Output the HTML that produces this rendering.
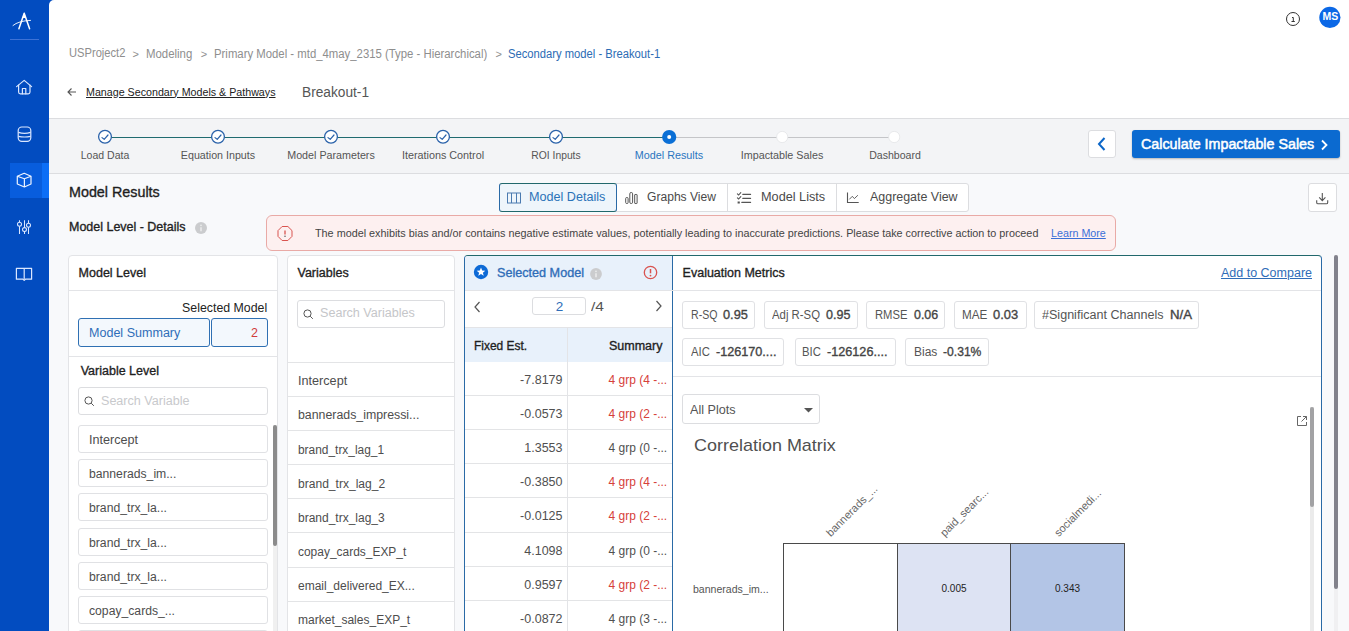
<!DOCTYPE html>
<html><head><meta charset="utf-8">
<style>
*{box-sizing:border-box;margin:0;padding:0}
html,body{width:1349px;height:631px;overflow:hidden;font-family:"Liberation Sans",sans-serif;background:#f8f9fb;position:relative}
.a{position:absolute}
.t{position:absolute;white-space:nowrap;line-height:1}
svg{position:absolute;overflow:visible}
</style></head><body>
<div class="a" style="left:40px;top:0px;width:30px;height:30px;background:#024cc0;border-radius:0px;"></div>
<div class="a" style="left:0px;top:0px;width:49px;height:631px;background:#024cc0;border-radius:0px;"></div>
<div class="a" style="left:49px;top:0;width:1300px;height:119px;background:#fff;border-bottom:1px solid #dcdde0;border-top-left-radius:5px"></div>
<div class="a" style="left:49px;top:118px;width:1300px;height:56px;background:#f3f4f6;border-top:1px solid #dcdde0;border-bottom:1px solid #dcdde0"></div>
<svg style="left:0px;top:0px" width="49" height="300">
  <g fill="none" stroke="#fff" stroke-linecap="round" stroke-linejoin="round">
    <path d="M18.9 28.8 L24.2 13.2 L29.6 28.8" stroke-width="1.5"/>
    <path d="M13 25.5 Q18.5 20.8 30.5 20.4" stroke-width="0.9"/>
  </g>
  <path d="M24.2 12.6 L26 18 L22.4 18 Z" fill="#fff"/>
  <line x1="10" y1="39.5" x2="39" y2="39.5" stroke="#3d72d6" stroke-width="1"/>
  <g fill="none" stroke="#dbe7ff" stroke-width="1.2" stroke-linejoin="round" stroke-linecap="round">
    <path d="M16.6 86.6 L24.2 80.4 L31.6 86.6"/>
    <path d="M18.6 85 V92 Q18.6 93.8 20.4 93.8 H28.2 Q30 93.8 30 92 V85"/>
    <path d="M22.4 93.8 V88.5 H25.8 V93.8"/>
  </g>
  <g fill="none" stroke="#dbe7ff" stroke-width="1.2">
    <rect x="18.2" y="127" width="12.6" height="14.4" rx="3.6"/>
    <path d="M18.4 132.4 Q24.5 134.4 30.6 132.4"/>
    <path d="M18.4 136.4 Q24.5 137.6 30.6 136.4"/>
  </g>
  <rect x="10" y="163" width="32" height="35" fill="#085ddd"/>
  <rect x="42" y="163" width="7" height="35" fill="#0c6ef6"/>
  <g fill="none" stroke="#eef4ff" stroke-width="1.2" stroke-linejoin="round">
    <path d="M24.2 173.3 L31 176.3 V184 L24.4 187 L17.3 184 V176.3 Z"/>
    <path d="M17.3 176.3 L24.4 178.8 L31 176.3 M24.4 178.8 V187"/>
  </g>
  <g fill="none" stroke="#dbe7ff" stroke-width="1.05">
    <path d="M19.5 220.3 V222.3 M19.5 226.3 V234 M24.5 220.3 V227.6 M24.5 231.6 V234 M28.5 220.3 V223.3 M28.5 227.3 V234"/>
    <circle cx="19.5" cy="224.3" r="2"/>
    <circle cx="24.5" cy="229.6" r="2"/>
    <circle cx="28.5" cy="225.3" r="2"/>
  </g>
  <g fill="none" stroke="#dbe7ff" stroke-width="1.2" stroke-linejoin="round">
    <path d="M16.4 268.3 H31.6 V279.2 H25.4 L24.2 280.3 L23 279.2 H16.4 Z"/>
    <path d="M24.2 268.3 V279.2"/>
  </g></svg>
<svg style="left:1280px;top:5px" width="69" height="30"><circle cx="13" cy="14" r="6.5" fill="none" stroke="#333" stroke-width="1"/>
  <path d="M12 12.5 H13.3 V16.5 M11.5 16.5 H14.8" fill="none" stroke="#333" stroke-width="1"/>
  <circle cx="49.9" cy="12.4" r="10.6" fill="#0b68e6"/></svg>
<div id="t1" class="t" style="left:1030.30px;width:600px;text-align:center;top:10.75px;font-size:10.5px;color:#fff;font-weight:bold;">MS</div>
<div id="t2" class="t" style="transform:scaleX(0.9291);transform-origin:0 50%;left:68.60px;top:47.00px;font-size:12px;color:#8e8e8e;">USProject2</div>
<div id="t3" class="t" style="left:132.60px;top:48.50px;font-size:11px;color:#8e8e8e;">&gt;</div>
<div id="t4" class="t" style="transform:scaleX(0.9507);transform-origin:0 50%;left:146.40px;top:48.00px;font-size:12px;color:#8e8e8e;">Modeling</div>
<div id="t5" class="t" style="left:200.80px;top:48.50px;font-size:11px;color:#8e8e8e;">&gt;</div>
<div id="t6" class="t" style="transform:scaleX(0.9461);transform-origin:0 50%;left:214.00px;top:48.00px;font-size:12px;color:#8e8e8e;">Primary Model - mtd_4may_2315 (Type - Hierarchical)</div>
<div id="t7" class="t" style="left:495.50px;top:48.50px;font-size:11px;color:#8e8e8e;">&gt;</div>
<div id="t8" class="t" style="transform:scaleX(0.9352);transform-origin:0 50%;left:508.30px;top:48.00px;font-size:12px;color:#2c6cb4;">Secondary model - Breakout-1</div>
<svg style="left:66px;top:86px" width="12" height="12"><path d="M2 6 H10 M5.5 2.5 L2 6 L5.5 9.5" fill="none" stroke="#555" stroke-width="1.1"/></svg>
<div id="t9" class="t" style="transform:scaleX(0.9715);transform-origin:0 50%;left:85.50px;top:86.50px;font-size:11px;color:#222;text-decoration:underline;">Manage Secondary Models &amp; Pathways</div>
<div id="t10" class="t" style="transform:scaleX(0.9783);transform-origin:0 50%;left:302.00px;top:85.00px;font-size:14px;color:#555;">Breakout-1</div>
<svg style="left:0px;top:118px" width="1000" height="56">
  <rect x="105" y="19" width="564" height="1" fill="#1f6b70"/>
  <rect x="669" y="19" width="225" height="1" fill="#c4c5c8"/>
  <g fill="#fff" stroke="#2a62aa" stroke-width="1.3">
    <circle cx="105" cy="18.8" r="6.4"/><circle cx="218" cy="18.8" r="6.4"/><circle cx="331" cy="18.8" r="6.4"/>
    <circle cx="443" cy="18.8" r="6.4"/><circle cx="556" cy="18.8" r="6.4"/>
  </g>
  <g fill="none" stroke="#2a62aa" stroke-width="1.2" stroke-linecap="round" stroke-linejoin="round">
    <path d="M102 19.6 L104.2 21.3 L108 17"/><path d="M215 19.6 L217.2 21.3 L221 17"/>
    <path d="M328 19.6 L330.2 21.3 L334 17"/><path d="M440 19.6 L442.2 21.3 L446 17"/>
    <path d="M553 19.6 L555.2 21.3 L559 17"/>
  </g>
  <circle cx="669.2" cy="19" r="7.1" fill="#0a6fd6"/>
  <circle cx="669.2" cy="19" r="2" fill="#fff"/>
  <circle cx="782.2" cy="19" r="5.6" fill="#fff" stroke="#e3e4e7" stroke-width="0.8"/>
  <circle cx="894.2" cy="19" r="5.6" fill="#fff" stroke="#e3e4e7" stroke-width="0.8"/></svg>
<div id="t11" class="t" style="transform:scaleX(0.9554);transform-origin:50% 50%;left:-195.25px;width:600px;text-align:center;top:149.50px;font-size:11px;color:#555;">Load Data</div>
<div id="t12" class="t" style="transform:scaleX(0.9718);transform-origin:50% 50%;left:-82.25px;width:600px;text-align:center;top:149.50px;font-size:11px;color:#555;">Equation Inputs</div>
<div id="t13" class="t" style="transform:scaleX(0.9747);transform-origin:50% 50%;left:30.60px;width:600px;text-align:center;top:149.50px;font-size:11px;color:#555;">Model Parameters</div>
<div id="t14" class="t" style="transform:scaleX(0.9813);transform-origin:50% 50%;left:143.30px;width:600px;text-align:center;top:149.50px;font-size:11px;color:#555;">Iterations Control</div>
<div id="t15" class="t" style="transform:scaleX(0.9377);transform-origin:50% 50%;left:256.35px;width:600px;text-align:center;top:149.50px;font-size:11px;color:#555;">ROI Inputs</div>
<div id="t16" class="t" style="transform:scaleX(0.9799);transform-origin:50% 50%;left:369.15px;width:600px;text-align:center;top:149.50px;font-size:11px;color:#2a74c0;">Model Results</div>
<div id="t17" class="t" style="transform:scaleX(0.9788);transform-origin:50% 50%;left:482.00px;width:600px;text-align:center;top:149.50px;font-size:11px;color:#555;">Impactable Sales</div>
<div id="t18" class="t" style="transform:scaleX(0.9605);transform-origin:50% 50%;left:594.85px;width:600px;text-align:center;top:149.50px;font-size:11px;color:#555;">Dashboard</div>
<div class="a" style="left:1088px;top:130px;width:28px;height:28px;background:#fff;border:1px solid #dcdde0;border-radius:3px;"></div>
<svg style="left:1088px;top:130px" width="28" height="28"><path d="M16.5 8 L11 14 L16.5 20" fill="none" stroke="#0b66c8" stroke-width="2"/></svg>
<div class="a" style="left:1132px;top:130px;width:208px;height:28px;background:#0b6ad0;border-radius:3px;box-shadow:0 1px 2px rgba(0,0,0,.25);"></div>
<div id="t19" class="t" style="transform:scaleX(1.0209);transform-origin:0 50%;left:1140.80px;top:137.00px;font-size:14px;color:#fff;-webkit-text-stroke:0.35px #fff;-webkit-text-stroke:0.5px #fff;">Calculate Impactable Sales</div>
<svg style="left:1132px;top:130px" width="208" height="28"><path d="M190 10.5 L194.5 15 L190 19.5" fill="none" stroke="#fff" stroke-width="1.8"/></svg>
<div id="t20" class="t" style="transform:scaleX(1.0225);transform-origin:0 50%;left:68.90px;top:185.00px;font-size:14px;color:#1f1f1f;-webkit-text-stroke:0.35px #1f1f1f;">Model Results</div>
<div id="t21" class="t" style="transform:scaleX(0.9597);transform-origin:0 50%;left:69.00px;top:220.00px;font-size:13px;color:#1f1f1f;-webkit-text-stroke:0.35px #1f1f1f;">Model Level - Details</div>
<svg style="left:195px;top:221.5px" width="12" height="12"><circle cx="6" cy="6" r="6" fill="#cbccce"/><path d="M6 5.2 V9.2" stroke="#eceded" stroke-width="1.5"/><circle cx="6" cy="3.3" r="0.85" fill="#eceded"/></svg>
<div class="a" style="left:499px;top:183px;width:470px;height:29px;background:#fff;border:1px solid #dcdde0;border-radius:3px;"></div>
<div class="a" style="left:616px;top:183px;width:1px;height:29px;background:#dcdde0;border-radius:0px;"></div>
<div class="a" style="left:727px;top:183px;width:1px;height:29px;background:#dcdde0;border-radius:0px;"></div>
<div class="a" style="left:836px;top:183px;width:1px;height:29px;background:#dcdde0;border-radius:0px;"></div>
<div class="a" style="left:499px;top:183px;width:118px;height:29px;background:#eef5fb;border:1px solid #2a6aa6;border-radius:3px;border-top-color:#21686c;border-bottom-color:#21686c;"></div>
<svg style="left:507px;top:192px" width="14" height="11"><g fill="none" stroke="#4a7ab0" stroke-width="1"><rect x="0.5" y="1" width="13" height="10"/><path d="M4.5 1 V11 M9.5 1 V11"/></g></svg>
<div id="t22" class="t" style="transform:scaleX(1.0075);transform-origin:0 50%;left:529.00px;top:190.75px;font-size:12.5px;color:#2a72b8;">Model Details</div>
<svg style="left:625px;top:190px" width="13" height="15"><g fill="none" stroke="#555" stroke-width="1"><rect x="0.7" y="7.5" width="2.4" height="6" rx="1"/><rect x="4.8" y="2.5" width="2.8" height="11" rx="1.3"/><rect x="9.7" y="4.5" width="2.4" height="9" rx="0.4"/></g></svg>
<div id="t23" class="t" style="transform:scaleX(0.9671);transform-origin:0 50%;left:646.60px;top:190.75px;font-size:12.5px;color:#4a4a4a;">Graphs View</div>
<svg style="left:736px;top:190px" width="16" height="15"><g fill="none" stroke="#555" stroke-width="1.1" stroke-linecap="round"><path d="M1.4 3.9 L2.6 5 L4.8 2.6 M1.4 7.9 L2.6 9 L4.8 6.6"/><path d="M6.8 4.4 H14.6 M6.8 8.4 H14.6 M5.8 12.4 H14.6"/></g><rect x="1.6" y="11.5" width="2.2" height="2" fill="#555"/></svg>
<div id="t24" class="t" style="transform:scaleX(1.0153);transform-origin:0 50%;left:760.80px;top:190.75px;font-size:12.5px;color:#4a4a4a;">Model Lists</div>
<svg style="left:846px;top:191px" width="14" height="13"><g fill="none" stroke="#555" stroke-width="1"><path d="M1.5 1.5 V11.5 H12.7" stroke-width="1.1"/><path d="M3.3 8.4 L6.3 5.3 L8.4 7.6 L11.9 4.2" stroke-width="0.9"/></g></svg>
<div id="t25" class="t" style="transform:scaleX(0.9951);transform-origin:0 50%;left:870.00px;top:190.75px;font-size:12.5px;color:#4a4a4a;">Aggregate View</div>
<div class="a" style="left:1308px;top:183px;width:29px;height:29px;background:#fff;border:1px solid #dcdde0;border-radius:3px;"></div>
<svg style="left:1308px;top:183px" width="29" height="29"><g fill="none" stroke="#555" stroke-width="1.1"><path d="M14.3 10 V17.6 M11.2 14.4 L14.3 17.6 L17.4 14.4"/><path d="M8.7 17.3 V19.4 Q8.7 20.8 10.1 20.8 H18.3 Q19.7 20.8 19.7 19.4 V17.3"/></g></svg>
<div class="a" style="left:266px;top:215px;width:850px;height:36px;background:#fdf0f0;border:1px solid #e9aaa6;border-radius:6px;"></div>
<svg style="left:277px;top:225px" width="16" height="16"><path d="M5.1 1.5 H10.9 L15 5.6 V11.4 L10.9 15.5 H5.1 L1 11.4 V5.6 Z" fill="none" stroke="#d9534f" stroke-width="1" stroke-linejoin="round"/><path d="M8 5.6 V9.6" stroke="#d9534f" stroke-width="1.3"/><circle cx="8" cy="11.3" r="0.75" fill="#555"/></svg>
<div id="t26" class="t" style="transform:scaleX(0.9826);transform-origin:0 50%;left:314.60px;top:227.50px;font-size:11px;color:#444;">The model exhibits bias and/or contains negative estimate values, potentially leading to inaccurate predictions. Please take corrective action to proceed</div>
<div id="t27" class="t" style="transform:scaleX(0.9740);transform-origin:0 50%;left:1051.20px;top:227.50px;font-size:11px;color:#3b6fd8;text-decoration:underline;">Learn More</div>
<div class="a" style="left:68px;top:255px;width:210px;height:400px;background:#fff;border:1px solid #e3e4e7;border-radius:4px;"></div>
<div class="a" style="left:69px;top:290px;width:208px;height:1px;background:#e3e4e7;border-radius:0px;"></div>
<div id="t28" class="t" style="left:78.60px;top:266.75px;font-size:12.5px;color:#1f1f1f;-webkit-text-stroke:0.35px #1f1f1f;">Model Level</div>
<div id="t29" class="t" style="transform:scaleX(0.9876);transform-origin:100% 50%;right:1081.60px;top:301.75px;font-size:12.5px;color:#222;">Selected Model</div>
<div class="a" style="left:78px;top:318px;width:132px;height:29px;background:#f3f8fd;border:1px solid #2f70b3;border-radius:3px;"></div>
<div id="t30" class="t" style="transform:scaleX(1.0033);transform-origin:0 50%;left:89.00px;top:326.75px;font-size:12.5px;color:#2f6db8;">Model Summary</div>
<div class="a" style="left:211px;top:318px;width:57px;height:29px;background:#f3f8fd;border:1px solid #2f70b3;border-radius:3px;"></div>
<div id="t31" class="t" style="right:1091.00px;top:326.75px;font-size:12.5px;color:#d13b3b;">2</div>
<div class="a" style="left:69px;top:356px;width:208px;height:1px;background:#e3e4e7;border-radius:0px;"></div>
<div id="t32" class="t" style="transform:scaleX(1.0000);transform-origin:0 50%;left:80.70px;top:364.75px;font-size:12.5px;color:#1f1f1f;-webkit-text-stroke:0.35px #1f1f1f;">Variable Level</div>
<div class="a" style="left:78px;top:387px;width:190px;height:28px;background:#fff;border:1px solid #dcdde0;border-radius:3px;"></div>
<svg style="left:84px;top:396px" width="11" height="11"><circle cx="4.5" cy="4.5" r="3.6" fill="none" stroke="#555" stroke-width="1"/><path d="M7.2 7.2 L9.8 9.8" stroke="#555" stroke-width="1"/></svg>
<div id="t33" class="t" style="transform:scaleX(1.0055);transform-origin:0 50%;left:101.00px;top:394.75px;font-size:12.5px;color:#c8c9cc;">Search Variable</div>
<div class="a" style="left:78px;top:425px;width:190px;height:28px;background:#fff;border:1px solid #e0e1e4;border-radius:3px;"></div>
<div id="t34" class="t" style="transform:scaleX(1.0074);transform-origin:0 50%;left:89.00px;top:433.75px;font-size:12.5px;color:#4d4d4d;">Intercept</div>
<div class="a" style="left:78px;top:459px;width:190px;height:28px;background:#fff;border:1px solid #e0e1e4;border-radius:3px;"></div>
<div id="t35" class="t" style="transform:scaleX(0.9750);transform-origin:0 50%;left:89.00px;top:467.75px;font-size:12.5px;color:#4d4d4d;">bannerads_im...</div>
<div class="a" style="left:78px;top:493px;width:190px;height:28px;background:#fff;border:1px solid #e0e1e4;border-radius:3px;"></div>
<div id="t36" class="t" style="transform:scaleX(0.9760);transform-origin:0 50%;left:89.00px;top:501.75px;font-size:12.5px;color:#4d4d4d;">brand_trx_la...</div>
<div class="a" style="left:78px;top:528px;width:190px;height:28px;background:#fff;border:1px solid #e0e1e4;border-radius:3px;"></div>
<div id="t37" class="t" style="transform:scaleX(0.9760);transform-origin:0 50%;left:89.00px;top:536.75px;font-size:12.5px;color:#4d4d4d;">brand_trx_la...</div>
<div class="a" style="left:78px;top:562px;width:190px;height:28px;background:#fff;border:1px solid #e0e1e4;border-radius:3px;"></div>
<div id="t38" class="t" style="transform:scaleX(0.9760);transform-origin:0 50%;left:89.00px;top:570.75px;font-size:12.5px;color:#4d4d4d;">brand_trx_la...</div>
<div class="a" style="left:78px;top:596px;width:190px;height:28px;background:#fff;border:1px solid #e0e1e4;border-radius:3px;"></div>
<div id="t39" class="t" style="transform:scaleX(0.9745);transform-origin:0 50%;left:89.00px;top:604.75px;font-size:12.5px;color:#4d4d4d;">copay_cards_...</div>
<div class="a" style="left:78px;top:630px;width:190px;height:28px;background:#fff;border:1px solid #e0e1e4;border-radius:3px;"></div>
<div class="a" style="left:273px;top:425px;width:4px;height:206px;background:#f0f0f0;border-radius:0px;"></div>
<div class="a" style="left:273px;top:425px;width:4px;height:121px;background:#8b8b8b;border-radius:2px;"></div>
<div class="a" style="left:287px;top:255px;width:168px;height:400px;background:#fff;border:1px solid #e3e4e7;border-radius:4px;"></div>
<div class="a" style="left:288px;top:290px;width:166px;height:1px;background:#e3e4e7;border-radius:0px;"></div>
<div id="t40" class="t" style="left:297.50px;top:266.75px;font-size:12.5px;color:#1f1f1f;-webkit-text-stroke:0.35px #1f1f1f;">Variables</div>
<div class="a" style="left:297px;top:300px;width:148px;height:28px;background:#fff;border:1px solid #dcdde0;border-radius:3px;"></div>
<svg style="left:303px;top:309px" width="11" height="11"><circle cx="4.5" cy="4.5" r="3.6" fill="none" stroke="#555" stroke-width="1"/><path d="M7.2 7.2 L9.8 9.8" stroke="#555" stroke-width="1"/></svg>
<div id="t41" class="t" style="transform:scaleX(1.0067);transform-origin:0 50%;left:319.90px;top:306.75px;font-size:12.5px;color:#c5c6c9;">Search Variables</div>
<div class="a" style="left:288px;top:362px;width:166px;height:1px;background:#e3e4e6;border-radius:0px;"></div>
<div id="t42" class="t" style="transform:scaleX(1.0115);transform-origin:0 50%;left:297.80px;top:374.75px;font-size:12.5px;color:#4d4d4d;">Intercept</div>
<div class="a" style="left:288px;top:396px;width:166px;height:1px;background:#e3e4e6;border-radius:0px;"></div>
<div id="t43" class="t" style="transform:scaleX(0.9871);transform-origin:0 50%;left:297.80px;top:408.75px;font-size:12.5px;color:#4d4d4d;">bannerads_impressi...</div>
<div class="a" style="left:288px;top:430px;width:166px;height:1px;background:#e3e4e6;border-radius:0px;"></div>
<div id="t44" class="t" style="transform:scaleX(0.9529);transform-origin:0 50%;left:297.80px;top:443.75px;font-size:12.5px;color:#4d4d4d;">brand_trx_lag_1</div>
<div class="a" style="left:288px;top:464px;width:166px;height:1px;background:#e3e4e6;border-radius:0px;"></div>
<div id="t45" class="t" style="transform:scaleX(0.9650);transform-origin:0 50%;left:297.80px;top:477.75px;font-size:12.5px;color:#4d4d4d;">brand_trx_lag_2</div>
<div class="a" style="left:288px;top:498px;width:166px;height:1px;background:#e3e4e6;border-radius:0px;"></div>
<div id="t46" class="t" style="transform:scaleX(0.9595);transform-origin:0 50%;left:297.80px;top:511.75px;font-size:12.5px;color:#4d4d4d;">brand_trx_lag_3</div>
<div class="a" style="left:288px;top:532px;width:166px;height:1px;background:#e3e4e6;border-radius:0px;"></div>
<div id="t47" class="t" style="transform:scaleX(0.9562);transform-origin:0 50%;left:297.80px;top:545.75px;font-size:12.5px;color:#4d4d4d;">copay_cards_EXP_t</div>
<div class="a" style="left:288px;top:567px;width:166px;height:1px;background:#e3e4e6;border-radius:0px;"></div>
<div id="t48" class="t" style="transform:scaleX(0.9605);transform-origin:0 50%;left:297.80px;top:579.75px;font-size:12.5px;color:#4d4d4d;">email_delivered_EX...</div>
<div class="a" style="left:288px;top:601px;width:166px;height:1px;background:#e3e4e6;border-radius:0px;"></div>
<div id="t49" class="t" style="transform:scaleX(0.9612);transform-origin:0 50%;left:297.80px;top:613.75px;font-size:12.5px;color:#4d4d4d;">market_sales_EXP_t</div>
<div class="a" style="left:464px;top:255px;width:858px;height:400px;background:#fff;border:1px solid #2a6aa6;border-radius:4px;border-top-color:#21686c;"></div>
<div class="a" style="left:465px;top:256px;width:207px;height:34px;background:#e8f1fb;border-top-left-radius:3px"></div>
<div class="a" style="left:672px;top:256px;width:1px;height:375px;background:#2a6aa6;border-radius:0px;"></div>
<div class="a" style="left:465px;top:290px;width:856px;height:1px;background:#e3e4e7;border-radius:0px;"></div>
<svg style="left:473px;top:264px" width="16" height="16"><circle cx="8" cy="8" r="7.2" fill="#0d6ad6"/><path d="M8 3.6 L9.2 6.6 L12.3 6.7 L9.9 8.7 L10.7 11.8 L8 10 L5.3 11.8 L6.1 8.7 L3.7 6.7 L6.8 6.6 Z" fill="#fff"/></svg>
<div id="t50" class="t" style="transform:scaleX(1.0096);transform-origin:0 50%;left:497.40px;top:266.75px;font-size:12.5px;color:#2f6db8;-webkit-text-stroke:0.35px #2f6db8;">Selected Model</div>
<svg style="left:590px;top:268px" width="12" height="12"><circle cx="6" cy="6" r="5.9" fill="#cbccce"/><path d="M6 5.2 V9.2" stroke="#eceded" stroke-width="1.5"/><circle cx="6" cy="3.3" r="0.85" fill="#eceded"/></svg>
<svg style="left:643px;top:265px" width="15" height="15"><circle cx="7.5" cy="7.5" r="6.2" fill="none" stroke="#d9534f" stroke-width="1.3"/><path d="M7.5 4 V8.3" stroke="#d9534f" stroke-width="1.5"/><circle cx="7.5" cy="10.6" r="0.9" fill="#d9534f"/></svg>
<svg style="left:472px;top:300px" width="10" height="14"><path d="M7.5 2 L3 7 L7.5 12" fill="none" stroke="#555" stroke-width="1.2"/></svg>
<div class="a" style="left:532px;top:297px;width:54px;height:18px;background:#fff;border:1px solid #dcdde0;border-radius:3px;"></div>
<div id="t51" class="t" style="left:259.50px;width:600px;text-align:center;top:299.75px;font-size:13.5px;color:#2f6db8;">2</div>
<div id="t52" class="t" style="transform:scaleX(1.1540);transform-origin:0 50%;left:591.20px;top:299.75px;font-size:13.5px;color:#555;">/4</div>
<svg style="left:654px;top:299px" width="10" height="14"><path d="M2.5 2 L7 7 L2.5 12" fill="none" stroke="#555" stroke-width="1.2"/></svg>
<div class="a" style="left:465px;top:327px;width:207px;height:35px;background:#e8f1fb;border-top:1px solid #e3e4e7"></div>
<div class="a" style="left:567px;top:327px;width:1px;height:304px;background:#e3e4e7;border-radius:0px;"></div>
<div id="t53" class="t" style="transform:scaleX(0.9554);transform-origin:0 50%;left:474.30px;top:339.75px;font-size:12.5px;color:#1f1f1f;-webkit-text-stroke:0.35px #1f1f1f;">Fixed Est.</div>
<div id="t54" class="t" style="transform:scaleX(1.0022);transform-origin:100% 50%;right:686.40px;top:339.75px;font-size:12.5px;color:#1f1f1f;-webkit-text-stroke:0.35px #1f1f1f;">Summary</div>
<div id="t55" class="t" style="right:786.50px;top:373.75px;font-size:12.5px;color:#505050;">-7.8179</div>
<div id="t56" class="t" style="transform:scaleX(0.9584);transform-origin:100% 50%;right:681.70px;top:373.75px;font-size:12.5px;color:#d6403a;">4 grp (4 -...</div>
<div class="a" style="left:465px;top:395px;width:207px;height:1px;background:#e3e4e6;border-radius:0px;"></div>
<div id="t57" class="t" style="right:786.50px;top:407.75px;font-size:12.5px;color:#505050;">-0.0573</div>
<div id="t58" class="t" style="transform:scaleX(0.9584);transform-origin:100% 50%;right:681.70px;top:407.75px;font-size:12.5px;color:#d6403a;">4 grp (2 -...</div>
<div class="a" style="left:465px;top:429px;width:207px;height:1px;background:#e3e4e6;border-radius:0px;"></div>
<div id="t59" class="t" style="right:786.50px;top:441.75px;font-size:12.5px;color:#505050;">1.3553</div>
<div id="t60" class="t" style="transform:scaleX(0.9584);transform-origin:100% 50%;right:681.70px;top:441.75px;font-size:12.5px;color:#505050;">4 grp (0 -...</div>
<div class="a" style="left:465px;top:463px;width:207px;height:1px;background:#e3e4e6;border-radius:0px;"></div>
<div id="t61" class="t" style="right:786.50px;top:475.75px;font-size:12.5px;color:#505050;">-0.3850</div>
<div id="t62" class="t" style="transform:scaleX(0.9584);transform-origin:100% 50%;right:681.70px;top:475.75px;font-size:12.5px;color:#d6403a;">4 grp (4 -...</div>
<div class="a" style="left:465px;top:497px;width:207px;height:1px;background:#e3e4e6;border-radius:0px;"></div>
<div id="t63" class="t" style="right:786.50px;top:509.75px;font-size:12.5px;color:#505050;">-0.0125</div>
<div id="t64" class="t" style="transform:scaleX(0.9584);transform-origin:100% 50%;right:681.70px;top:509.75px;font-size:12.5px;color:#d6403a;">4 grp (2 -...</div>
<div class="a" style="left:465px;top:532px;width:207px;height:1px;background:#e3e4e6;border-radius:0px;"></div>
<div id="t65" class="t" style="right:786.50px;top:544.75px;font-size:12.5px;color:#505050;">4.1098</div>
<div id="t66" class="t" style="transform:scaleX(0.9584);transform-origin:100% 50%;right:681.70px;top:544.75px;font-size:12.5px;color:#505050;">4 grp (0 -...</div>
<div class="a" style="left:465px;top:566px;width:207px;height:1px;background:#e3e4e6;border-radius:0px;"></div>
<div id="t67" class="t" style="right:786.50px;top:578.75px;font-size:12.5px;color:#505050;">0.9597</div>
<div id="t68" class="t" style="transform:scaleX(0.9584);transform-origin:100% 50%;right:681.70px;top:578.75px;font-size:12.5px;color:#d6403a;">4 grp (2 -...</div>
<div class="a" style="left:465px;top:600px;width:207px;height:1px;background:#e3e4e6;border-radius:0px;"></div>
<div id="t69" class="t" style="right:786.50px;top:612.75px;font-size:12.5px;color:#505050;">-0.0872</div>
<div id="t70" class="t" style="transform:scaleX(0.9584);transform-origin:100% 50%;right:681.70px;top:612.75px;font-size:12.5px;color:#505050;">4 grp (3 -...</div>
<div id="t71" class="t" style="left:682.60px;top:266.75px;font-size:12.5px;color:#1f1f1f;-webkit-text-stroke:0.35px #1f1f1f;">Evaluation Metrics</div>
<div id="t72" class="t" style="right:37.00px;top:266.75px;font-size:12.5px;color:#2f6db8;text-decoration:underline;">Add to Compare</div>
<div class="a" style="left:682px;top:301px;width:73px;height:28px;background:#fff;border:1px solid #e0e1e4;border-radius:3px;"></div>
<div id="t73" class="t" style="transform:scaleX(0.8480);transform-origin:0 50%;left:690.70px;top:308.75px;font-size:12.5px;color:#555;">R-SQ</div>
<div id="t74" class="t" style="transform:scaleX(1.0228);transform-origin:0 50%;left:723.20px;top:308.75px;font-size:12.5px;color:#444;-webkit-text-stroke:0.35px #444;">0.95</div>
<div class="a" style="left:764px;top:301px;width:94px;height:28px;background:#fff;border:1px solid #e0e1e4;border-radius:3px;"></div>
<div id="t75" class="t" style="transform:scaleX(0.9091);transform-origin:0 50%;left:772.00px;top:308.75px;font-size:12.5px;color:#555;">Adj R-SQ</div>
<div id="t76" class="t" style="transform:scaleX(1.0023);transform-origin:0 50%;left:825.90px;top:308.75px;font-size:12.5px;color:#444;-webkit-text-stroke:0.35px #444;">0.95</div>
<div class="a" style="left:866px;top:301px;width:79px;height:28px;background:#fff;border:1px solid #e0e1e4;border-radius:3px;"></div>
<div id="t77" class="t" style="transform:scaleX(0.8997);transform-origin:0 50%;left:874.50px;top:308.75px;font-size:12.5px;color:#555;">RMSE</div>
<div id="t78" class="t" style="transform:scaleX(0.9941);transform-origin:0 50%;left:913.60px;top:308.75px;font-size:12.5px;color:#444;-webkit-text-stroke:0.35px #444;">0.06</div>
<div class="a" style="left:954px;top:301px;width:73px;height:28px;background:#fff;border:1px solid #e0e1e4;border-radius:3px;"></div>
<div id="t79" class="t" style="transform:scaleX(0.9375);transform-origin:0 50%;left:961.60px;top:308.75px;font-size:12.5px;color:#555;">MAE</div>
<div id="t80" class="t" style="transform:scaleX(1.0311);transform-origin:0 50%;left:993.00px;top:308.75px;font-size:12.5px;color:#444;-webkit-text-stroke:0.35px #444;">0.03</div>
<div class="a" style="left:1034px;top:301px;width:165px;height:28px;background:#fff;border:1px solid #e0e1e4;border-radius:3px;"></div>
<div id="t81" class="t" style="transform:scaleX(1.0048);transform-origin:0 50%;left:1042.20px;top:308.75px;font-size:12.5px;color:#555;">#Significant Channels</div>
<div id="t82" class="t" style="transform:scaleX(1.0555);transform-origin:0 50%;left:1170.00px;top:308.75px;font-size:12.5px;color:#444;-webkit-text-stroke:0.35px #444;">N/A</div>
<div class="a" style="left:682px;top:338px;width:102px;height:28px;background:#fff;border:1px solid #e0e1e4;border-radius:3px;"></div>
<div id="t83" class="t" style="transform:scaleX(0.9067);transform-origin:0 50%;left:690.70px;top:345.75px;font-size:12.5px;color:#555;">AIC</div>
<div id="t84" class="t" style="transform:scaleX(1.0106);transform-origin:0 50%;left:715.60px;top:345.75px;font-size:12.5px;color:#444;-webkit-text-stroke:0.35px #444;">-126170....</div>
<div class="a" style="left:795px;top:338px;width:101px;height:28px;background:#fff;border:1px solid #e0e1e4;border-radius:3px;"></div>
<div id="t85" class="t" style="transform:scaleX(0.9067);transform-origin:0 50%;left:802.20px;top:345.75px;font-size:12.5px;color:#555;">BIC</div>
<div id="t86" class="t" style="transform:scaleX(1.0123);transform-origin:0 50%;left:827.00px;top:345.75px;font-size:12.5px;color:#444;-webkit-text-stroke:0.35px #444;">-126126....</div>
<div class="a" style="left:905px;top:338px;width:84px;height:28px;background:#fff;border:1px solid #e0e1e4;border-radius:3px;"></div>
<div id="t87" class="t" style="transform:scaleX(0.9577);transform-origin:0 50%;left:913.60px;top:345.75px;font-size:12.5px;color:#555;">Bias</div>
<div id="t88" class="t" style="transform:scaleX(0.9695);transform-origin:0 50%;left:942.80px;top:345.75px;font-size:12.5px;color:#444;-webkit-text-stroke:0.35px #444;">-0.31%</div>
<div class="a" style="left:673px;top:376px;width:648px;height:1px;background:#e3e4e7;border-radius:0px;"></div>
<div class="a" style="left:682px;top:394px;width:138px;height:30px;background:#fff;border:1px solid #dcdde0;border-radius:3px;"></div>
<div id="t89" class="t" style="transform:scaleX(1.0098);transform-origin:0 50%;left:690.40px;top:403.75px;font-size:12.5px;color:#555;">All Plots</div>
<svg style="left:804px;top:407.8px" width="9" height="5"><path d="M0 0 H9 L4.5 4.5 Z" fill="#555"/></svg>
<svg style="left:1296px;top:415px" width="12" height="12"><g fill="none" stroke="#666" stroke-width="1"><path d="M5 1.5 H1.5 V10.5 H10.5 V7"/><path d="M7 1.5 H10.5 V5 M10.5 1.5 L5.5 6.5"/></g></svg>
<div class="a" style="left:1310px;top:407px;width:4px;height:224px;background:#ebebeb;border-radius:0px;"></div>
<div class="a" style="left:1310px;top:407px;width:4px;height:100px;background:#a2a2a4;border-radius:2px;"></div>
<div id="t90" class="t" style="transform:scaleX(1.0570);transform-origin:0 50%;left:693.60px;top:437.00px;font-size:17px;color:#505050;">Correlation Matrix</div>
<div class="a" style="left:783px;top:543px;width:115px;height:100px;background:#fff;border:1px solid #4a4a4a;border-radius:0px;"></div>
<div class="a" style="left:897px;top:543px;width:114px;height:100px;background:#dde3f3;border:1px solid #4a4a4a;border-radius:0px;"></div>
<div class="a" style="left:1010px;top:543px;width:115px;height:100px;background:#b3c5e6;border:1px solid #4a4a4a;border-radius:0px;"></div>
<div id="t91" class="t" style="left:654.00px;width:600px;text-align:center;top:583.50px;font-size:10px;color:#222;">0.005</div>
<div id="t92" class="t" style="left:767.50px;width:600px;text-align:center;top:583.50px;font-size:10px;color:#222;">0.343</div>
<div id="t93" class="t" style="transform:scaleX(1.0040);transform-origin:0 50%;left:693.30px;top:583.75px;font-size:10.5px;color:#555;">bannerads_im...</div>
<div class="t" style="left:831px;top:527.5px;font-size:11px;color:#666;transform:rotate(-45deg);transform-origin:0 9.5px">bannerads_...</div>
<div class="t" style="left:945px;top:527.5px;font-size:11px;color:#666;transform:rotate(-45deg);transform-origin:0 9.5px">paid_searc...</div>
<div class="t" style="left:1059px;top:527.5px;font-size:11px;color:#666;transform:rotate(-45deg);transform-origin:0 9.5px">socialmedi...</div>
<div class="a" style="left:1334px;top:255px;width:4px;height:376px;background:#f0f0f2;border-radius:0px;"></div>
<div class="a" style="left:1334px;top:255px;width:3.5px;height:334px;background:#82828c;border-radius:2px;"></div>
</body></html>
